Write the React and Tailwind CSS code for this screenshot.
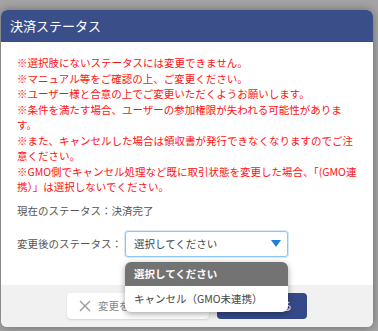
import React from "react";

const notes = [
  "※選択肢にないステータスには変更できません。",
  "※マニュアル等をご確認の上、ご変更ください。",
  "※ユーザー様と合意の上でご変更いただくようお願いします。",
  "※条件を満たす場合、ユーザーの参加権限が失われる可能性がありま",
  "す。",
  "※また、キャンセルした場合は領収書が発行できなくなりますのでご注",
  "意ください。",
  "※GMO側でキャンセル処理など既に取引状態を変更した場合、「(GMO連",
  "携）」は選択しないでください。",
];

function StatusSelect() {
  return (
    <div className="relative">
      <div className="flex h-[26px] w-[163px] items-center justify-between rounded-[3px] border border-[#8fc6f5] bg-white pl-[8px] pr-[6px] text-[#444] shadow-[0_0_0_1px_#d6eafc]">
        <span>選択してください</span>
        <svg width="10" height="7" viewBox="0 0 10 7">
          <path d="M0 0H10L5 7Z" fill="#1f7fd6" />
        </svg>
      </div>

      {/* 開いたプルダウン */}
      <div className="absolute left-0 top-[31px] z-10 w-[163px] overflow-hidden rounded-[6px] bg-white shadow-[0_2px_6px_rgba(0,0,0,0.35)]">
        <div className="flex h-[24px] items-center bg-[#737373] pl-[9px] font-bold text-white">
          選択してください
        </div>
        <div className="flex h-[26px] items-center pl-[9px] text-[#444]">
          キャンセル（GMO未連携）
        </div>
      </div>
    </div>
  );
}

export default function App() {
  return (
    <div
      className="h-[331px] w-[378px] overflow-hidden bg-[#a4a4a4] pl-px pt-[10px] text-[10.5px]"
      style={{ fontFamily: '"Noto Sans CJK JP", "Noto Sans", sans-serif' }}
    >
      <div className="flex h-[317px] w-[372px] flex-col rounded-[6px] bg-white shadow-[0_0_10px_rgba(0,0,0,0.35)]">
        <div className="flex h-[32px] items-center rounded-t-[6px] bg-[#3a4f8a] pl-[9px] text-[13px] text-white">
          決済ステータス
        </div>

        <div className="flex-1 px-[16px] pt-[13px]">
          <div className="leading-[15.5px] text-[#ff1111]">
            {notes.map((line, i) => (
              <div key={i} className="whitespace-nowrap">
                {line}
              </div>
            ))}
          </div>

          <div className="mt-[8px] leading-[16px] text-[#555]">
            現在のステータス：決済完了
          </div>

          <div className="mt-[12px] flex items-center gap-[3px] text-[#555]">
            <span>変更後のステータス：</span>
            <StatusSelect />
          </div>
        </div>

        <div className="flex h-[42px] items-center justify-center gap-[8px] rounded-b-[6px] bg-[#f1f1f1]">
          <button className="flex h-[26px] w-[142px] items-center gap-[7px] rounded-[4px] bg-white pl-[12px] text-[#8a8a8a] shadow-[0_1px_2px_rgba(0,0,0,0.12)]">
            <svg width="12" height="12" viewBox="0 0 12 12">
              <path
                d="M1 1L11 11M11 1L1 11"
                stroke="#9a9a9a"
                strokeWidth="1.4"
                fill="none"
              />
            </svg>
            変更をキャンセル
          </button>
          <button className="flex h-[26px] w-[90px] items-center justify-center gap-[6px] rounded-[4px] bg-[#34498a] text-white">
            <svg width="12" height="12" viewBox="0 0 12 12">
              <path
                d="M1.5 6.5L4.5 9.5L10.5 2.5"
                stroke="#fff"
                strokeWidth="1.4"
                fill="none"
              />
            </svg>
            変更する
          </button>
        </div>
      </div>
    </div>
  );
}
